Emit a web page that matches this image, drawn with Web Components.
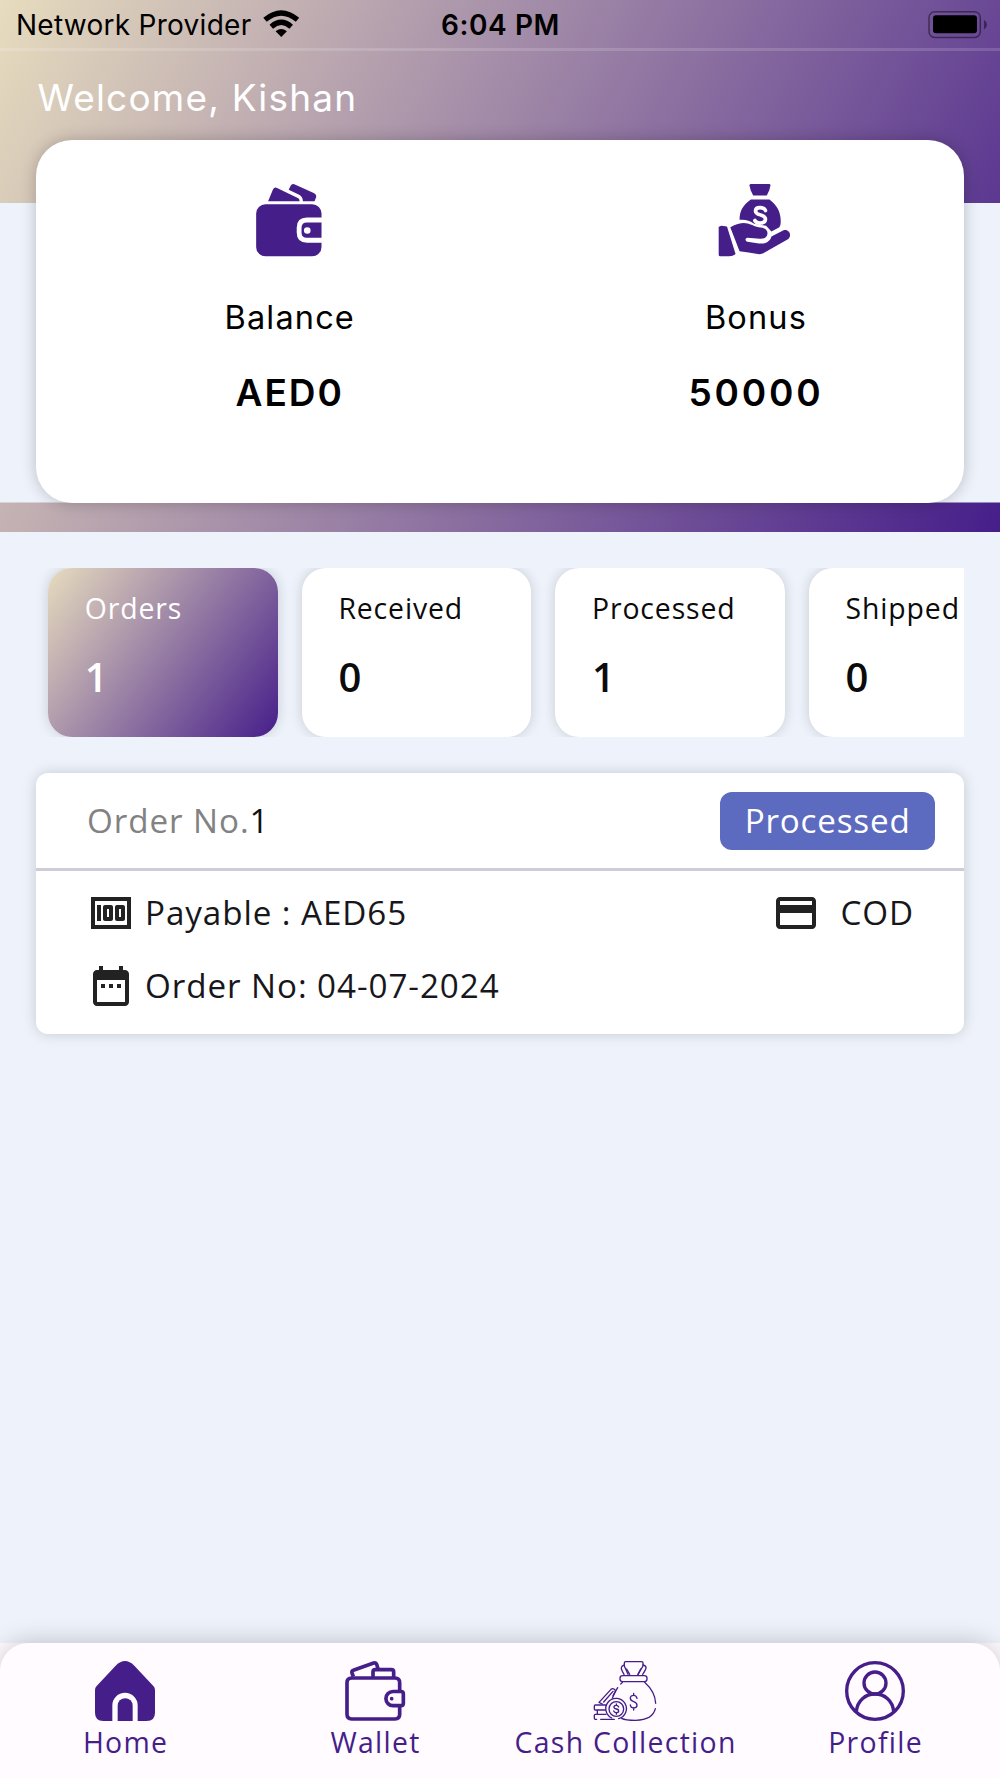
<!DOCTYPE html>
<html lang="en">
<head>
<meta charset="utf-8">
<title>Dashboard</title>
<style>
  html, body { margin: 0; height: 100%; }
  body { background: #edf2fb; font-family: "Open Sans", "Noto Sans", sans-serif; overflow: hidden; }
</style>
</head>
<body>
<dashboard-app></dashboard-app>

<script>
const ICONS = {
  wallet: ['168 70 200 220', `
    <path d="M205 122L220 86Q224 78 232 82L296 113Q300 116 300 122Z"/>
    <path d="M267 87L273 75Q277 68 284 71L344 98Q352 103 350 109L345 122H310Q309 107 297 102Z"/>
    <rect x="169" y="131" width="197" height="157" rx="28"/>
    <path d="M368 178.500H322Q298.500 178.500 298.500 202V216Q298.500 239.500 322 239.500H368" fill="none" stroke="#fff" stroke-width="14.500"/>
    <circle cx="323" cy="210" r="10" fill="#fff"/>`],
  bonus: ['174 70 218 220', `
    <path d="M268 74Q268 70 272 70H327Q331 70 331 74Q330 88 320 105H279Q269 88 268 74Z"/>
    <path d="M272 117H328C352 134 363 158 362 185Q362 194 358 200L334 213L318 196L282 190Q262 175 238 178C238 150 250 132 272 117Z"/>
    <path d="M316 150C312 138 286 138 286 151C286 166 315 160 316 175C317 190 291 192 284 180" fill="none" stroke="#fff" stroke-width="11" stroke-linecap="round"/>
    <path d="M175 201Q177 196 184 196L200 198L226 281Q218 288 207 288H180Q175 288 175 283Z"/>
    <path d="M210 200Q238 186 256 188C275 190 284 200 301 201C316 202 323 209 322 220C321 231 312 236 299 235L262 232Q255 233 256 239Q257 244 262 244L296 249C314 252 330 244 334 228L372 209C386 205 397 223 385 236L312 277Q304 283 293 281Q265 276 238 273Z"/>`],
  home: ['285 123 180 180', `
    <path d="M285 210Q285 203 290 198L347 137Q375 109 403 137L460 198Q465 203 465 210V278Q465 303 440 303H413V256A38 38 0 0 0 337 256V303H310Q285 303 285 278Z"/>
    <path d="M353 303V257A22.500 22.500 0 0 1 398 257V303Z"/>`],
  purse: ['1035 123 180 180', `
    <g fill="none" stroke="currentColor" stroke-width="11" stroke-linejoin="round">
      <path d="M1199 212V188Q1199 174 1185 174H1055Q1041 174 1041 188V283Q1041 297 1055 297H1185Q1199 297 1199 283V260"/>
      <path d="M1179 214.500H1203Q1210 214.500 1210 221.500V250Q1210 257 1203 257H1179A21 21 0 0 1 1179 214.500Z"/>
      <path d="M1060 170L1056 159Q1054 153 1060 151L1121 129Q1128 127 1130 133L1134 146"/>
      <path d="M1119 172V156Q1119 149 1126 149H1174Q1181 149 1181 156V172"/>
    </g><circle cx="1175" cy="236" r="5.500"/>`],
  cash: ['285 123 180 180', `
    <g fill="none" stroke="currentColor" stroke-width="4" stroke-linecap="round" stroke-linejoin="round">
      <path d="M384 163L373 138V129Q373 125 377 125H425Q429 125 429 129V138L414 163"/>
      <path d="M373 135Q365 137 364 143Q363 148 372 163M380 147L389 163"/>
      <path d="M429 135Q438 137 438 143Q438 148 428 163M422 147L414 163"/>
      <rect x="360" y="167" width="81" height="18" rx="8"/>
      <path d="M367 187Q365 190 362 192M434 187C456 207 466 227 467 250M466 266C461 288 442 300 407 301C386 301 372 299 365 295M353 203L339 227"/>
      <path d="M297 247L333 208Q337 204 342 207L347 212L337 235M297 247L307 252M339 214L311 246"/>
      <path d="M318 255H286Q283 255 283 258V267Q283 270 286 270H316M292 270V283M318 283H286Q283 283 283 286V295Q283 298 286 298H290M302 298H343"/>
      <path d="M356 296A31 31 0 1 0 335 294"/>
      <circle cx="349" cy="267" r="22"/>
      <path d="M356 261Q354 256 349 256Q342 256 342 261Q342 266 349 267Q356 268 356 273Q356 278 349 278Q343 278 341 273M349 252V256M349 278V283"/>
      <path d="M411 235Q409 226 401 226Q391 226 391 235Q391 242 401 245Q411 248 411 256Q411 264 401 264Q392 264 391 255M401 220V226M401 264V270"/>
    </g>`],
  profile: ['1035 123 180 180', `
    <g fill="none" stroke="currentColor" stroke-width="10">
      <circle cx="1125" cy="213" r="85"/>
      <circle cx="1125" cy="189" r="33"/>
      <path d="M1069 274C1072 242 1096 222 1125 222S1178 242 1181 274"/>
    </g>`],
  money: ['0 0 24 24', `<path d="M5 8h2v8H5zm7 0H9c-.55 0-1 .45-1 1v6c0 .55.45 1 1 1h3c.55 0 1-.45 1-1V9c0-.55-.45-1-1-1zm-1 6h-1v-4h1v4zm7-6h-3c-.55 0-1 .45-1 1v6c0 .55.45 1 1 1h3c.55 0 1-.45 1-1V9c0-.55-.45-1-1-1zm-1 6h-1v-4h1v4zM2 4v16h20V4H2zm18 14H4V6h16v12z"/>`],
  date: ['0 0 24 24', `<path d="M9 11H7v2h2v-2zm4 0h-2v2h2v-2zm4 0h-2v2h2v-2zm2-7h-1V2h-2v2H8V2H6v2H5c-1.110 0-2 .9-2 2v14c0 1.100.89 2 2 2h14c1.100 0 2-.9 2-2V6c0-1.100-.9-2-2-2zm0 16H5V9h14v11z"/>`],
  card: ['0 0 24 24', `<path d="M20 4H4c-1.110 0-2 .89-2 2v12c0 1.110.89 2 2 2h16c1.110 0 2-.89 2-2V6c0-1.110-.89-2-2-2zm0 14H4v-6h16v6zm0-10H4V6h16v2z"/>`],
  wifi: ['788 30 110 81', `
    <g fill="none" stroke="currentColor" stroke-width="16">
      <path d="M794 59Q843 18 892 59"/><path d="M813 80Q843 54 873 80"/>
    </g><path d="M826 94Q843 80 860 94L843 111Z"/>`],
  battery: ['1284 32 180 82', `
    <rect x="1287" y="34.500" width="154" height="77" rx="17" fill="none" stroke="#000" stroke-opacity=".45" stroke-width="4.500"/>
    <rect x="1299" y="45" width="132" height="54" rx="9" fill="#000"/>
    <path d="M1452 58Q1461 64 1461 73Q1461 82 1452 88Z" fill="#000" fill-opacity=".45"/>`]
};

class Base extends HTMLElement {
  connectedCallback() {
    if (!this.shadowRoot) this.attachShadow({ mode: 'open' }).innerHTML = this.render();
  }
  attr(name, fallback = '') { return this.getAttribute(name) ?? fallback; }
}

customElements.define('app-icon', class extends Base {
  render() {
    const [box, shapes] = ICONS[this.attr('name')];
    return `<style>
      :host { display: block; flex: none; }
      svg { display: block; width: 100%; height: 100%; overflow: visible; fill: currentColor; }
    </style><svg viewBox="${box}" aria-hidden="true">${shapes}</svg>`;
  }
});

customElements.define('status-bar', class extends Base {
  render() {
    return `<style>
      :host { display: grid; grid-template-columns: 1fr auto 1fr; box-sizing: border-box; height: 51px;
        padding: 0 15px 0 16px; border-bottom: 3px solid rgba(255,255,255,.15);
        font: 400 28px/51px Inter, sans-serif; color: #000; white-space: nowrap; }
      .left { display: flex; gap: 11.500px; letter-spacing: .27px; }
      .wifi { width: 36.500px; height: 27px; margin-top: 10px; }
      .time { font-weight: 600; letter-spacing: .6px; }
      .battery { width: 60px; height: 27.300px; margin-top: 10.700px; justify-self: end; margin-right: -3px; }
    </style>
    <div class="left"><span>Network Provider</span><app-icon class="wifi" name="wifi"></app-icon></div>
    <div class="time">6:04 PM</div>
    <app-icon class="battery" name="battery"></app-icon>`;
  }
});

customElements.define('balance-item', class extends Base {
  render() {
    return `<style>
      :host { display: flex; flex-direction: column; align-items: center; font-family: Inter, sans-serif; color: #000; }
      app-icon { width: var(--icon-width, 72px); height: 73px; margin-left: var(--icon-shift, -1px); color: #461e89; }
      .label { margin-top: 41px; font-size: 32.500px; font-weight: 400; line-height: 39.500px; letter-spacing: 1.150px; }
      .value { margin-top: 32px; font-size: 37px; font-weight: 600; line-height: 46px; letter-spacing: var(--track, 2px); }
    </style>
    <app-icon name="${this.attr('icon')}"></app-icon>
    <div class="label">${this.attr('label')}</div>
    <div class="value"><slot></slot></div>`;
  }
});

customElements.define('balance-card', class extends Base {
  render() {
    return `<style>
      :host { display: grid; grid-template-columns: 507.500px 425px; box-sizing: border-box; height: 362.500px;
        margin: 0 36px; padding-top: 44px; border-radius: 36px; background: #fff;
        box-shadow: 0 0 16px rgba(0,0,0,.22); }
    </style><slot></slot>`;
  }
});

customElements.define('dashboard-header', class extends Base {
  render() {
    return `<style>
      :host { display: flex; flex-direction: column; height: 531.500px;
        background: linear-gradient(#edf2fb, #edf2fb) 0 203px / 100% 299.500px no-repeat,
          linear-gradient(118deg, #e7dcbe, #461e8a); }
      h1 { margin: 0; height: 89px; padding-left: 37.400px; font: 400 37px/93.500px Inter, sans-serif;
        letter-spacing: 1.200px; color: #fff; }
    </style>
    <status-bar></status-bar>
    <h1>${this.attr('greeting')}</h1>
    <slot></slot>`;
  }
});

customElements.define('stat-tile', class extends Base {
  render() {
    return `<style>
      :host { display: block; flex: none; box-sizing: border-box; width: 229.500px; height: 169.300px;
        padding: 20px 0 0 36.500px; border-radius: 24px; background: #fff; color: #0b0b0b;
        box-shadow: 0 0 13px rgba(0,0,0,.16); white-space: nowrap; }
      :host([active]) { background: linear-gradient(126.400deg, #e7dcbe, #461e8a); color: #fff; }
      .label { font-size: 28.400px; font-weight: 400; line-height: 40px; letter-spacing: .87px; }
      .value { margin-top: 24px; font-size: 40px; font-weight: 600; line-height: 50px; }
    </style>
    <div class="label">${this.attr('label')}</div>
    <div class="value"><slot></slot></div>`;
  }
});

customElements.define('stat-row', class extends Base {
  render() {
    return `<style>
      :host { display: flex; gap: 24.100px; margin: 36px 36px 0; padding-left: 12.300px; overflow: hidden; }
    </style><slot></slot>`;
  }
});

customElements.define('status-badge', class extends Base {
  render() {
    return `<style>
      :host { display: block; box-sizing: border-box; width: 215px; height: 58px; margin-top: 1px; padding-left: 24.700px;
        border-radius: 12px; background: #5c6bc0; color: #fff; line-height: 58px; letter-spacing: .8px; }
    </style><slot></slot>`;
  }
});

customElements.define('order-card', class extends Base {
  render() {
    return `<style>
      :host { display: block; box-sizing: border-box; height: 261px; margin: 36px 36px 0; border-radius: 12px;
        background: #fff; box-shadow: 0 0 14px rgba(0,0,0,.17); font-size: 33.200px; font-weight: 400;
        letter-spacing: .93px; color: #17171b; white-space: nowrap; }
      header { display: flex; align-items: center; justify-content: space-between; height: 95.300px;
        padding: 0 29px 0 51px; border-bottom: 3px solid #d0ccd7; }
      .number { color: #828282; }
      .number b { font-weight: 400; color: #111; }
      .body { display: flex; flex-direction: column; gap: 25px; padding: 17.500px 50px 0 51px; }
      .line, .field { display: flex; align-items: center; }
      .line { height: 48px; justify-content: space-between; }
      .field { gap: 10px; }
      .pay { gap: 20px; }
      app-icon { width: 48px; height: 48px; margin-top: 1px; color: #222; }
    </style>
    <header>
      <div class="number">Order No.<b>${this.attr('number')}</b></div>
      <status-badge>${this.attr('status')}</status-badge>
    </header>
    <div class="body">
      <div class="line">
        <div class="field"><app-icon name="money"></app-icon><span>Payable : ${this.attr('payable')}</span></div>
        <div class="field pay"><app-icon name="card"></app-icon><span>${this.attr('method')}</span></div>
      </div>
      <div class="line">
        <div class="field"><app-icon name="date"></app-icon><span>Order No: ${this.attr('date')}</span></div>
      </div>
    </div>`;
  }
});

customElements.define('nav-item', class extends Base {
  render() {
    return `<style>
      :host { display: flex; flex: 1 1 0; min-width: 0; flex-direction: column; align-items: center; color: #461e89; }
      app-icon { width: 60px; height: 60px; }
      span { margin: 2.500px -1.200px 0 0; font-size: 28.400px; font-weight: 400; line-height: 36px;
        letter-spacing: 1.300px; white-space: nowrap; }
    </style>
    <app-icon name="${this.attr('icon')}"></app-icon><span><slot></slot></span>`;
  }
});

customElements.define('bottom-nav', class extends Base {
  render() {
    return `<style>
      :host { display: block; height: 135px; background: #fffbff; }
      nav { display: flex; box-sizing: border-box; height: 100%; padding-top: 18px; border-radius: 28px 28px 0 0;
        background: #fffbff; box-shadow: 0 0 26px rgba(0,0,0,.22); }
    </style><nav><slot></slot></nav>`;
  }
});

customElements.define('dashboard-app', class extends Base {
  render() {
    return `<style>
      :host { display: flex; flex-direction: column; width: 1000px; height: 1778px; overflow: hidden; background: #edf2fb; }
      main { flex: 1; min-height: 0; }
      .bonus { --icon-width: 73px; --icon-shift: -2.500px; --track: 2.800px; }
    </style>
    <main>
      <dashboard-header greeting="Welcome, Kishan">
        <balance-card>
          <balance-item icon="wallet" label="Balance">AED0</balance-item>
          <balance-item class="bonus" icon="bonus" label="Bonus">50000</balance-item>
        </balance-card>
      </dashboard-header>
      <stat-row>
        <stat-tile active label="Orders">1</stat-tile>
        <stat-tile label="Received">0</stat-tile>
        <stat-tile label="Processed">1</stat-tile>
        <stat-tile label="Shipped">0</stat-tile>
      </stat-row>
      <order-card number="1" status="Processed" payable="AED65" method="COD" date="04-07-2024"></order-card>
    </main>
    <bottom-nav>
      <nav-item icon="home">Home</nav-item>
      <nav-item icon="purse">Wallet</nav-item>
      <nav-item icon="cash">Cash Collection</nav-item>
      <nav-item icon="profile">Profile</nav-item>
    </bottom-nav>`;
  }
});
</script>
</body>
</html>
